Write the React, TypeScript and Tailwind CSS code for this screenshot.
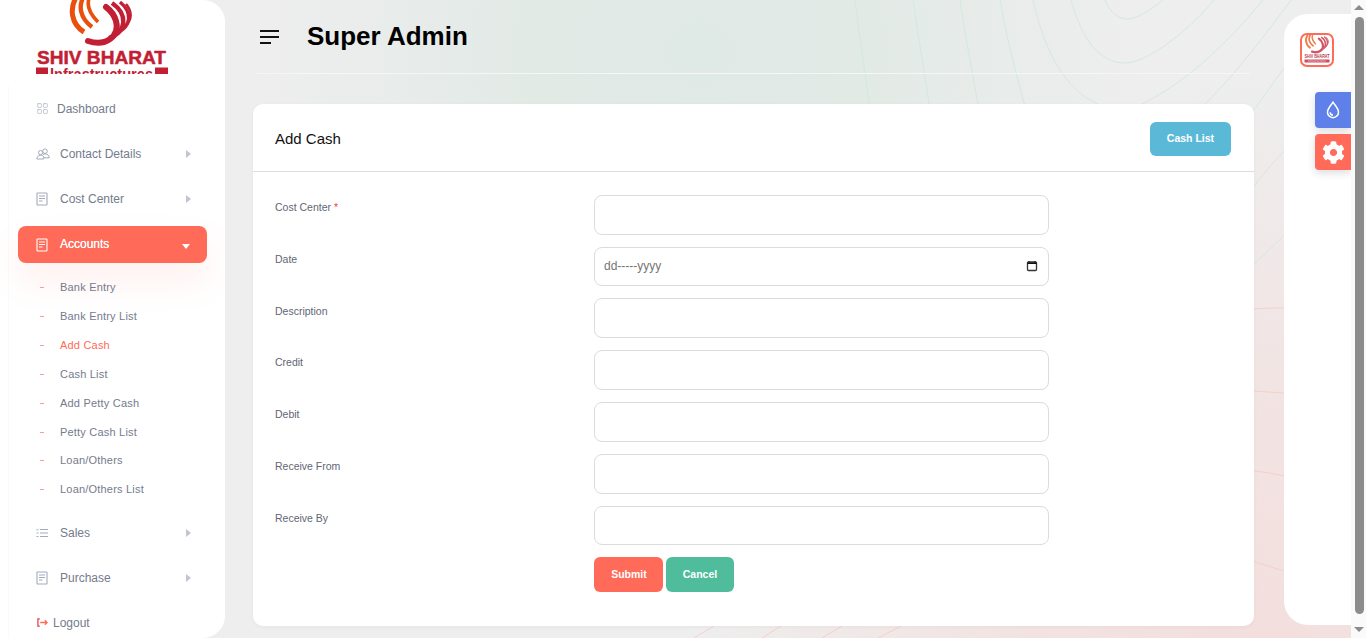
// App.tsx
// Add Cash admin screen: sidebar, form card and right-hand theme panel

import { LayoutGrid } from "lucide-react";
import { FaCog } from "react-icons/fa";

const SUB_ITEMS = [
  { label: "Bank Entry", top: "h-[29px]" },
  { label: "Bank Entry List", top: "h-[29px]" },
  { label: "Add Cash", top: "h-[29px]", active: true },
  { label: "Cash List", top: "h-[29px]" },
  { label: "Add Petty Cash", top: "h-[29px]" },
  { label: "Petty Cash List", top: "h-[28px]" },
  { label: "Loan/Others", top: "h-[28.5px]" },
  { label: "Loan/Others List", top: "h-[29.5px]" },
];

const FIELDS = [
  { label: "Cost Center", required: true },
  { label: "Date", placeholder: "dd-----yyyy", calendar: true },
  { label: "Description" },
  { label: "Credit" },
  { label: "Debit" },
  { label: "Receive From" },
  { label: "Receive By" },
];

function DocIcon({ className }: { className: string }) {
  return (
    <svg viewBox="0 0 12 14" className={className} fill="none" stroke="currentColor" strokeWidth="1.1">
      <rect x="1" y="1" width="10" height="12" rx="0.6" />
      <path d="M3 4h6M3 6.5h6M3 9h3.5" />
    </svg>
  );
}

function PeopleIcon() {
  return (
    <svg viewBox="0 0 14 12" className="h-[12px] w-[14px]" fill="none" stroke="currentColor" strokeWidth="1">
      <circle cx="4.6" cy="4.6" r="2.1" />
      <circle cx="9" cy="3.2" r="2.3" />
      <path d="M0.8 11c0-2.200 1.700-3.700 3.800-3.700 1.300 0 2.400 0.600 3.100 1.500v2.200z" />
      <path d="M7 6.400c0.600-0.300 1.300-0.500 2-0.500 2.300 0 4.300 1.600 4.300 3.900H8" />
    </svg>
  );
}

function ListIcon() {
  return (
    <svg viewBox="0 0 12 10" className="h-[10px] w-[12px]" fill="none" stroke="currentColor" strokeWidth="1">
      <path d="M4 1.500h8M4 5h8M4 8.500h8" />
      <path d="M0.500 1.500l0.800 0.700L2.600 0.800M0.500 8.500h2M0.500 5h2" />
    </svg>
  );
}

function Caret({ down }: { down?: boolean }) {
  if (down) {
    return (
      <svg viewBox="0 0 8 5" className="mt-[3px] h-[5px] w-2 fill-white">
        <path d="M0 0h8L4 5z" />
      </svg>
    );
  }
  return (
    <svg viewBox="0 0 5 8" className="h-2 w-[5px] fill-[#c0c5cf]">
      <path d="M0 0l5 4-5 4z" />
    </svg>
  );
}

function LogoMark() {
  return (
    <g fill="none">
      <g stroke="#e9500e">
        <path d="M41 -4C33 8 35 24 48 32" strokeWidth="5" />
        <path d="M48 -4C42 6 44 18 56 27" strokeWidth="4.4" />
        <path d="M54 -4C50 4 53 13 62 22" strokeWidth="3.6" />
      </g>
      <g stroke="#c21f35">
        <path d="M52 41C70 47 84 36 80 21C78 14 74 10 70 7" strokeWidth="6" strokeLinecap="round" />
        <path d="M73 38C91 32 92 14 76 3" strokeWidth="4.4" />
        <path d="M81 33C96 26 96 12 84 2" strokeWidth="3.4" />
        <path d="M88 27C97 20 96 11 90 4" strokeWidth="2.6" />
      </g>
    </g>
  );
}

function Logo({ className }: { className: string }) {
  return (
    <svg viewBox="0 0 132 74" className={className}>
      <LogoMark />
      <text
        x="65.5"
        y="63.5"
        textAnchor="middle"
        textLength="129"
        lengthAdjust="spacingAndGlyphs"
        fontFamily="'Liberation Sans', sans-serif"
        fontWeight="700"
        fontSize="18.5"
        fill="#c21f35"
        stroke="#c21f35"
        strokeWidth="0.5"
      >
        SHIV BHARAT
      </text>
      <rect x="0" y="67.5" width="12" height="6.5" fill="#c21f35" />
      <rect x="119" y="67.5" width="13" height="6.5" fill="#c21f35" />
      <text
        x="65.5"
        y="79.5"
        textAnchor="middle"
        textLength="103"
        lengthAdjust="spacingAndGlyphs"
        fontFamily="'Liberation Sans', sans-serif"
        fontWeight="700"
        fontSize="16"
        fill="#c21f35"
      >
        Infrastructures
      </text>
    </svg>
  );
}

function SmallLogo() {
  return (
    <svg viewBox="0 0 30 30" className="h-[30px] w-[30px]">
      <g transform="translate(-9.7 1) scale(0.38)" opacity="0.75">
        <LogoMark />
      </g>
      <text
        x="15"
        y="23"
        textAnchor="middle"
        textLength="25"
        lengthAdjust="spacingAndGlyphs"
        fontFamily="'Liberation Sans', sans-serif"
        fontWeight="700"
        fontSize="4.6"
        fill="#b8374a"
      >
        SHIV BHARAT
      </text>
      <rect x="2.5" y="24.5" width="25" height="3" fill="#c21f35" opacity="0.8" />
      <text
        x="15"
        y="27"
        textAnchor="middle"
        textLength="18"
        lengthAdjust="spacingAndGlyphs"
        fontFamily="'Liberation Sans', sans-serif"
        fontSize="2.6"
        fill="#f6c9cd"
      >
        Infrastructures
      </text>
    </svg>
  );
}

function NavRow({ icon, label, caret = true }: { icon: React.ReactNode; label: string; caret?: boolean }) {
  return (
    <div className="flex h-[45px] items-center pl-[36px] pr-[34px] text-[12px] text-[#747b8d]">
      <span className="flex w-[24px] shrink-0 text-[#a3aabb]">{icon}</span>
      <span className="flex-1">{label}</span>
      {caret && <Caret />}
    </div>
  );
}

function Sidebar() {
  return (
    <aside className="flex h-[638px] w-[225px] shrink-0 flex-col overflow-hidden rounded-r-[22px] bg-white">
      <div className="h-[86px] shrink-0 pl-[36px]">
        <Logo className="h-[74px] w-[132px]" />
      </div>
      <nav className="ml-[8px] flex-1 border-l border-[#fafafa]">
        <div className="-ml-[9px] flex h-[45px] items-center pl-[36px] text-[12px] text-[#747b8d]">
          <LayoutGrid size={13} strokeWidth={1.1} className="mr-[8px] text-[#a3aabb]" />
          Dashboard
        </div>
        <div className="-ml-[9px]">
          <NavRow icon={<PeopleIcon />} label="Contact Details" />
          <NavRow icon={<DocIcon className="h-[14px] w-[12px]" />} label="Cost Center" />
          <div className="mx-[18px] mt-[5px] flex h-[37px] items-center rounded-[8px] bg-[#ff6a59] pl-[18px] pr-[17px] text-[12px] font-normal text-white shadow-[0_18px_34px_rgba(255,106,89,0.1)]">
            <span className="w-[24px]">
              <DocIcon className="h-[14px] w-[12px]" />
            </span>
            <span className="mb-[2px] flex-1 [text-shadow:0_0_0.4px_white]">Accounts</span>
            <Caret down />
          </div>
          <ul className="mt-[10px]">
            {SUB_ITEMS.map((item) => (
              <li
                key={item.label}
                className={`flex items-center pl-[40px] text-[11px] tracking-[0.2px] ${item.top} ${
                  item.active ? "text-[#ff6a59]" : "text-[#747b8d]"
                }`}
              >
                <span className="mr-[16px] h-px w-[4px] bg-[#ff9c90]" />
                {item.label}
              </li>
            ))}
          </ul>
          <div className="mt-[6px]">
            <NavRow icon={<ListIcon />} label="Sales" />
            <NavRow icon={<DocIcon className="h-[14px] w-[12px]" />} label="Purchase" />
          </div>
          <div className="flex h-[45px] items-center pl-[37px] text-[12px] text-[#747b8d]">
            <svg viewBox="0 0 12 10" className="mr-[5px] h-[11px] w-[11px]" fill="none" strokeWidth="1.4">
              <path d="M3 1H1v8h2" stroke="#d9434e" />
              <path d="M3.500 5h7.500M8.500 2.500L11 5 8.500 7.500" stroke="#ff6a59" />
            </svg>
            Logout
          </div>
        </div>
      </nav>
    </aside>
  );
}

function FormRow({ label, required, placeholder, calendar }: (typeof FIELDS)[number]) {
  return (
    <div className="mb-[12px] flex h-[39.8px]">
      <label className="w-[319px] shrink-0 pt-[5.2px] text-[10.5px] text-[#5f6674]">
        {label}
        {required && <span className="text-[#ef4444]"> *</span>}
      </label>
      <div className="relative w-[455px]">
        <input
          type="text"
          placeholder={placeholder}
          className="h-full w-full rounded-[8px] border border-[#dcdcdc] bg-white pb-[1px] pl-[9px] pr-[10px] text-[12px] outline-none placeholder:text-[#757575]"
        />
        {calendar && (
          <svg viewBox="0 0 12 12" className="absolute right-[11px] top-[13px] h-3 w-3" fill="none">
            <path d="M3 1v1.500M9 1v1.500" stroke="#111" strokeWidth="1.2" />
            <rect x="1.5" y="2" width="9" height="8.5" rx="1" stroke="#333" strokeWidth="1.3" />
            <path d="M1.5 3.2h9" stroke="#111" strokeWidth="1.6" />
          </svg>
        )}
      </div>
    </div>
  );
}

function Contours() {
  return (
    <svg viewBox="0 0 1366 638" className="absolute inset-0 h-[638px] w-[1366px]" fill="none">
      <g stroke="#d4e8e0" strokeWidth="1">
        <path d="M855 0C859 35 865 70 870 110" />
        <path d="M913 0C918 35 924 70 930 110" />
        <path d="M960 0C965 35 972 70 979 110" />
        <path d="M1000 0C1006 35 1015 70 1026 110" />
        <path d="M1033 0C1044 50 1065 90 1098 104C1112 110 1130 110 1142 104C1190 80 1230 40 1263 0" />
        <path d="M1071 0C1082 40 1100 63 1125 63C1145 63 1185 35 1214 0" />
        <path d="M1105 0C1110 12 1118 19 1127 19C1138 19 1150 10 1163 0" />
        <path d="M1205 104C1235 75 1265 35 1295 -5" />
        <path d="M1254 110C1265 95 1275 80 1290 60" />
        <path d="M1254 186C1265 172 1275 160 1290 145" />
        <path d="M1254 264C1265 254 1275 244 1290 230" />
      </g>
      <g stroke="#f6cfca" strokeWidth="1">
        <path d="M1254 309C1265 308 1275 308 1290 308" />
        <path d="M1254 391C1265 392 1275 392 1290 394" />
        <path d="M1252 561L1284 571" />
        <path d="M1254 471C1265 472 1275 474 1290 477" />
        <path d="M694 638L714 626M762 638L781 626M822 638L842 626M878 638L901 626" />
      </g>
    </svg>
  );
}

export default function App() {
  return (
    <div className="relative flex h-[638px] w-[1366px] overflow-hidden bg-[#eeeeee] bg-[radial-gradient(circle_at_700px_50px,#dfe9e5_0,#e2eae6_170px,rgba(238,238,238,0)_440px),radial-gradient(circle_at_1250px_640px,#f3dfdd_0,#f2e3e2_220px,rgba(238,238,238,0)_560px)] font-['Liberation_Sans',Arial,sans-serif]">
      <Contours />
      <Sidebar />

      <main className="relative w-[1059px] shrink-0 pl-[28px] pr-[30px]">
        <header className="ml-[4px] mr-[4px] flex h-[74px] items-center border-b border-[#f6f6f6]">
          <svg viewBox="0 0 20 16" className="ml-[3px] h-4 w-5" fill="none" stroke="#111" strokeWidth="2">
            <path d="M0 2h19M0 8h19M0 14h11" />
          </svg>
          <h1 className="ml-[27px] text-[26px] font-bold text-black">Super Admin</h1>
        </header>

        <section className="mt-[30px] h-[522px] rounded-[10px] bg-white shadow-[0_1px_4px_rgba(0,0,0,0.04)]">
          <div className="flex h-[68px] items-center justify-between border-b border-[#dedede] pl-[22px] pr-[23px] pt-[2px]">
            <h2 className="pt-[1px] text-[15px] font-normal text-[#111]">Add Cash</h2>
            <button className="h-[34px] w-[81px] rounded-[6px] bg-[#5bb9d8] text-[10.5px] font-bold text-white">
              Cash List
            </button>
          </div>
          <form className="pl-[22px] pt-[22.8px]">
            {FIELDS.map((field) => (
              <FormRow key={field.label} {...field} />
            ))}
            <div className="ml-[319px] flex gap-[3px]">
              <button type="button" className="h-[35px] w-[69px] rounded-[6px] bg-[#ff6a59] pb-[1px] pl-[1px] text-[10.5px] font-bold text-white">
                Submit
              </button>
              <button type="button" className="h-[35px] w-[68px] rounded-[6px] bg-[#4fbd9c] pb-[1px] text-[10.5px] font-bold text-white">
                Cancel
              </button>
            </div>
          </form>
        </section>
      </main>

      <aside className="relative mt-[14px] flex h-[611px] w-[67px] shrink-0 flex-col rounded-l-[24px] bg-white">
        <div className="ml-[16px] mt-[19px] flex h-[34px] w-[34px] items-center justify-center overflow-hidden rounded-[7px] border-2 border-[#ff6a59] bg-white">
          <SmallLogo />
        </div>
        <div className="ml-[31px] mt-[25px] flex h-[36px] w-[36px] items-center justify-center rounded-l-[4px] bg-[#5f80e9] shadow-[0_3px_8px_rgba(0,0,0,0.14)]">
          <svg viewBox="0 0 14 18" className="h-[18px] w-[14px]" fill="none" stroke="white" strokeWidth="1.5">
            <path d="M7 1.2C5.6 3.6 1.5 7.4 1.5 11.2a5.5 5.5 0 0 0 11 0C12.5 7.4 8.4 3.6 7 1.2z" />
            <path d="M4.2 11.4a2.8 2.8 0 0 0 2.8 2.7" />
          </svg>
        </div>
        <div className="ml-[31px] mt-[6px] flex h-[36px] w-[36px] items-center justify-center rounded-l-[4px] bg-[#ff6a59] shadow-[0_3px_8px_rgba(0,0,0,0.14)]">
          <FaCog size={23} className="text-white" />
        </div>
      </aside>

      <div className="relative flex h-[638px] w-[15px] shrink-0 flex-col items-center bg-[#fafafa] pl-[2px] pr-[1px]">
        <span className="mt-[5px] h-0 w-0 border-x-[5px] border-b-[5px] border-x-transparent border-b-[#8c8c8c]" />
        <span className="mt-[7px] h-[597px] w-[9px] rounded-full bg-[#8c8c8c]" />
        <span className="mt-[13px] h-0 w-0 border-x-[5px] border-t-[5px] border-x-transparent border-t-[#8c8c8c]" />
      </div>
    </div>
  );
}
